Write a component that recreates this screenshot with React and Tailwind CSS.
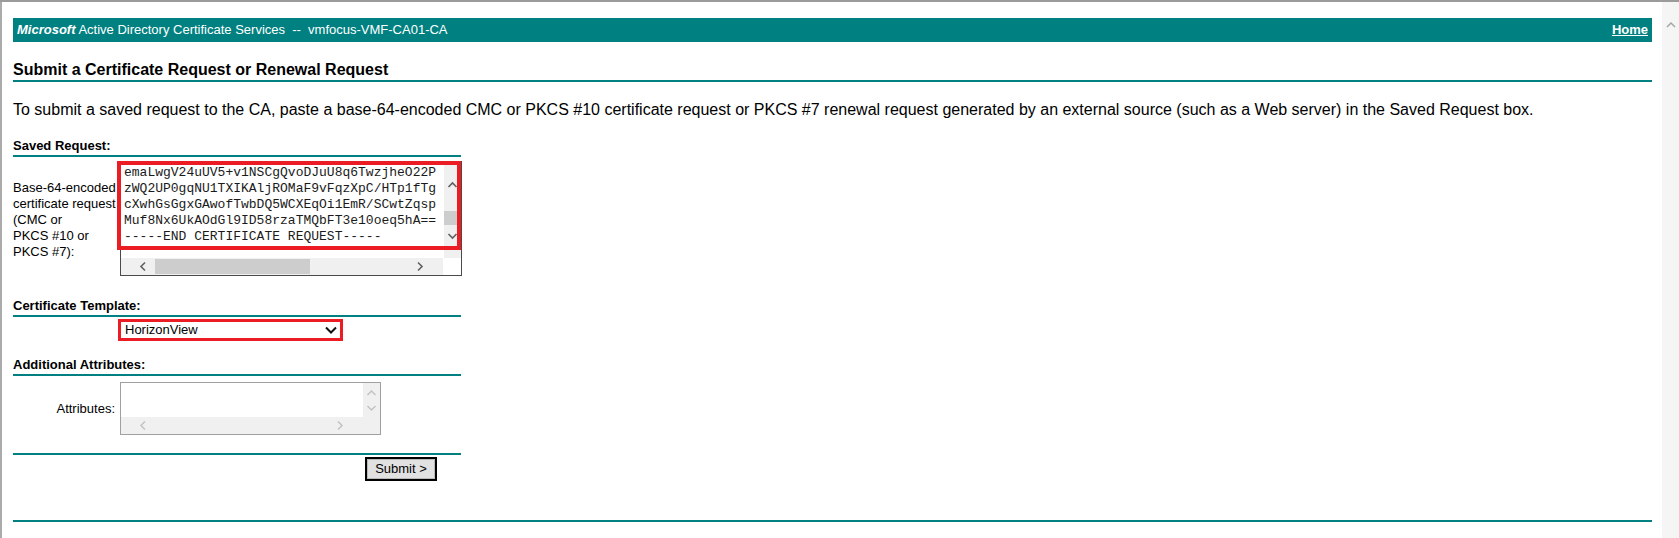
import React from 'react'

const REQUEST_LINES = [
    'emaLwgV24uUV5+v1NSCgQvoDJuU8q6TwzjheO22P',
    'zWQ2UP0gqNU1TXIKAljROMaF9vFqzXpC/HTp1fTg',
    'cXwhGsGgxGAwofTwbDQ5WCXEqOi1EmR/SCwtZqsp',
    'Muf8Nx6UkAOdGl9ID58rzaTMQbFT3e10oeq5hA==',
    '-----END CERTIFICATE REQUEST-----',
]

// section title with the teal rule under it
function SectionTitle({ children, className = '' }) {
    return (
        <div className={`w-[448px] border-b-2 border-[#008080] pb-[2px] text-[13px] font-bold leading-[15px] ${className}`}>
            {children}
        </div>
    )
}

function RequestVScroll() {
    return (
        <svg width="17" height="96" className="block shrink-0">
            <rect width="17" height="96" fill="#f0f0f0" />
            <polyline points="4.5,25 8.5,21 12.5,25" fill="none" stroke="#606060" strokeWidth="1.6" />
            <rect x="0" y="49" width="17" height="14" fill="#cdcdcd" />
            <polyline points="4.5,72 8.5,76 12.5,72" fill="none" stroke="#606060" strokeWidth="1.6" />
        </svg>
    )
}

function RequestHScroll() {
    return (
        <svg width="322" height="17" className="block shrink-0">
            <rect width="322" height="17" fill="#f0f0f0" />
            <polyline points="24,4.5 20,8.5 24,12.5" fill="none" stroke="#606060" strokeWidth="1.6" />
            <rect x="34" y="1" width="155" height="15" fill="#cdcdcd" />
            <polyline points="297,4.5 301,8.5 297,12.5" fill="none" stroke="#606060" strokeWidth="1.6" />
        </svg>
    )
}

function AttrVScroll() {
    return (
        <svg width="17" height="51" className="block shrink-0">
            <rect width="17" height="51" fill="#f0f0f0" />
            <polyline points="4.5,12 8.5,8 12.5,12" fill="none" stroke="#c2c2c2" strokeWidth="1.5" />
            <polyline points="4.5,23 8.5,27 12.5,23" fill="none" stroke="#c2c2c2" strokeWidth="1.5" />
        </svg>
    )
}

function AttrHScroll() {
    return (
        <svg width="242" height="17" className="block shrink-0">
            <rect width="242" height="17" fill="#f0f0f0" />
            <polyline points="24,4.5 20,8.5 24,12.5" fill="none" stroke="#c2c2c2" strokeWidth="1.5" />
            <polyline points="217,4.5 221,8.5 217,12.5" fill="none" stroke="#c2c2c2" strokeWidth="1.5" />
        </svg>
    )
}

export default function App() {
    return (
        <div className="flex h-[538px] w-full overflow-hidden border-t-2 border-[#9b9b9b] bg-white font-['Liberation_Sans',Arial,sans-serif] text-black">
            <div className="flex-1 border-l-2 border-[#ababab] pl-[11px] pr-[10px]">
                {/* Title bar */}
                <div className="mt-4 flex h-6 items-center justify-between bg-[#008080] px-1 text-[13px] text-white">
                    <span>
                        <b className="italic">Microsoft</b> Active Directory Certificate Services&nbsp; --&nbsp; vmfocus-VMF-CA01-CA
                    </span>
                    <a href="#" className="font-bold underline">Home</a>
                </div>

                {/* Heading */}
                <div className="mt-[18px] border-b-2 border-[#008080] text-base font-bold leading-5">
                    Submit a Certificate Request or Renewal Request
                </div>

                <p className="mt-[18px] text-base leading-5">
                    To submit a saved request to the CA, paste a base-64-encoded CMC or PKCS #10 certificate request or PKCS #7 renewal request generated by an external source (such as a Web server) in the Saved Request box.
                </p>

                {/* Saved request */}
                <SectionTitle className="mt-[18px]">Saved Request:</SectionTitle>
                <div className="mt-1 flex">
                    <div className="w-[107px] whitespace-nowrap pt-[19px] text-[13px] leading-4">
                        Base-64-encoded<br />
                        certificate request<br />
                        (CMC or<br />
                        PKCS #10 or<br />
                        PKCS #7):
                    </div>
                    <div className="relative h-[115px] w-[342px] border border-[#4a4a4a]">
                        <div className="flex">
                            <div className="h-[96px] flex-1 overflow-hidden whitespace-pre pl-[3px] pt-[3px] font-['Liberation_Mono','Courier_New',monospace] text-[13px] leading-4 text-[#1a1a1a]">
                                {REQUEST_LINES.map(line => (
                                    <div key={line}>{line}</div>
                                ))}
                            </div>
                            <RequestVScroll />
                        </div>
                        <div className="flex">
                            <RequestHScroll />
                            <div className="h-[17px] w-[17px] bg-white" />
                        </div>
                        {/* red highlight drawn over the box */}
                        <div className="absolute left-[-4px] top-[-1px] h-[89px] w-[344px] border-4 border-[#ec1c24]" />
                    </div>
                </div>

                {/* Template */}
                <SectionTitle className="mt-[22px]">Certificate Template:</SectionTitle>
                <div className="ml-[105px] mt-[2px] flex h-[22px] w-[225px] items-center justify-between border-[3px] border-[#ec1c24] pl-1 pr-[3px] text-[13px]">
                    <span>HorizonView</span>
                    <svg width="12" height="8" className="block">
                        <polyline points="1,1.5 6,6.5 11,1.5" fill="none" stroke="#111" strokeWidth="2" />
                    </svg>
                </div>

                {/* Attributes */}
                <SectionTitle className="mt-4">Additional Attributes:</SectionTitle>
                <div className="mt-[6px] flex items-center">
                    <div className="w-[107px] pr-[5px] text-right text-[13px] leading-4">Attributes:</div>
                    <div className="flex h-[53px] w-[261px] border border-[#a0a0a0]">
                        <div className="flex flex-1 flex-col">
                            <div className="flex-1 bg-white" />
                            <AttrHScroll />
                        </div>
                        <AttrVScroll />
                    </div>
                </div>

                <div className="mt-[18px] w-[448px] border-t-2 border-[#008080]" />
                <button className="ml-[352px] mt-[2px] h-6 w-[72px] border-2 border-black bg-[#e1e1e1] text-[13px] shadow-[inset_0_0_0_1px_#b9b9b9]">
                    Submit &gt;
                </button>

                <div className="mt-[39px] border-t-2 border-[#008080]" />
            </div>

            {/* page scrollbar */}
            <div className="flex w-[17px] flex-col items-center bg-[#f5f5f5] pt-5">
                <svg width="10" height="6" className="block">
                    <polyline points="1,5 5,1 9,5" fill="none" stroke="#a6a6a6" strokeWidth="1.5" />
                </svg>
            </div>
        </div>
    )
}
